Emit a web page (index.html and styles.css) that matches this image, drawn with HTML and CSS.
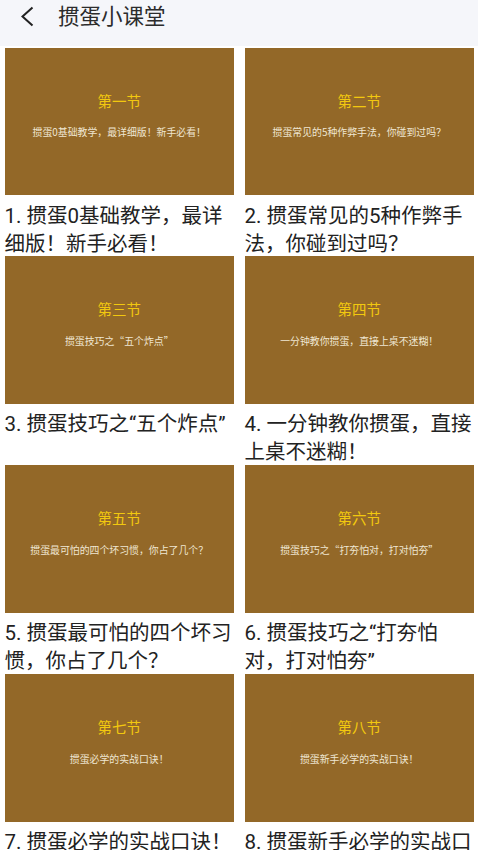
FILE: index.html
```html
<!DOCTYPE html>
<html lang="zh-CN">
<head>
    <meta charset="UTF-8">
    <meta name="viewport" content="width=device-width, initial-scale=1.0">
    <title>掼蛋小课堂</title>
    <link rel="stylesheet" href="styles.css">
</head>
<body>
<header class="topbar">
    <svg class="back" width="14" height="22" viewBox="0 0 14 22">
        <path d="M11.5 1.5 L1.5 10.5 L11.5 19.5" fill="none" stroke="#222" stroke-width="2"/>
    </svg>
    <h1>掼蛋小课堂</h1>
</header>

<main class="lessons">
    <section class="lesson">
        <div class="cover">
            <p class="cover-title">第一节</p>
            <p class="cover-sub">掼蛋0基础教学，最详细版！新手必看！</p>
        </div>
        <h2>1. 掼蛋0基础教学，最详细版！新手必看！</h2>
    </section>
    <section class="lesson">
        <div class="cover">
            <p class="cover-title">第二节</p>
            <p class="cover-sub">掼蛋常见的5种作弊手法，你碰到过吗？</p>
        </div>
        <h2>2. 掼蛋常见的5种作弊手法，你碰到过吗？</h2>
    </section>
    <section class="lesson">
        <div class="cover">
            <p class="cover-title">第三节</p>
            <p class="cover-sub">掼蛋技巧之“五个炸点”</p>
        </div>
        <h2>3. 掼蛋技巧之“五个炸点”</h2>
    </section>
    <section class="lesson">
        <div class="cover">
            <p class="cover-title">第四节</p>
            <p class="cover-sub">一分钟教你掼蛋，直接上桌不迷糊！</p>
        </div>
        <h2>4. 一分钟教你掼蛋，直接上桌不迷糊！</h2>
    </section>
    <section class="lesson">
        <div class="cover">
            <p class="cover-title">第五节</p>
            <p class="cover-sub">掼蛋最可怕的四个坏习惯，你占了几个？</p>
        </div>
        <h2>5. 掼蛋最可怕的四个坏习惯，你占了几个？</h2>
    </section>
    <section class="lesson">
        <div class="cover">
            <p class="cover-title">第六节</p>
            <p class="cover-sub">掼蛋技巧之“打夯怕对，打对怕夯”</p>
        </div>
        <h2>6. 掼蛋技巧之“打夯怕对，打对怕夯”</h2>
    </section>
    <section class="lesson">
        <div class="cover">
            <p class="cover-title">第七节</p>
            <p class="cover-sub">掼蛋必学的实战口诀！</p>
        </div>
        <h2>7. 掼蛋必学的实战口诀！</h2>
    </section>
    <section class="lesson">
        <div class="cover">
            <p class="cover-title">第八节</p>
            <p class="cover-sub">掼蛋新手必学的实战口诀！</p>
        </div>
        <h2>8. 掼蛋新手必学的实战口诀！</h2>
    </section>
</main>
</body>
</html>
```

FILE: styles.css
```css
* {
    margin: 0;
    padding: 0;
    box-sizing: border-box;
}
html, body {
    height: 850px;
    overflow: hidden;
}
body {
    font-family: Roboto, "Noto Sans CJK SC", sans-serif;
    background-color: #ffffff;
    color: #222;
}
.topbar {
    display: flex;
    align-items: center;
    height: 46px;
    padding: 0 0 12px 21px;
    background-color: #f5f6fa;
}
.back {
    margin-right: 23px;
}
.topbar h1 {
    margin-bottom: 5px;
    font-size: 21.5px;
    font-weight: 400;
    color: #2c2c2c;
}
.lessons {
    display: grid;
    grid-template-columns: 229.5px 229.5px;
    grid-auto-rows: 208.8px;
    column-gap: 10.5px;
    padding: 1.7px 0 0 4.5px;
}
.cover {
    display: flex;
    flex-direction: column;
    align-items: center;
    height: 147.5px;
    padding-top: 46px;
    background-color: #936828;
}
.cover-title {
    font-size: 14.5px;
    line-height: 18px;
    color: #f2c80f;
}
.cover-sub {
    margin-top: 14.5px;
    font-family: "Noto Sans CJK SC", sans-serif;
    font-size: 9.9px;
    line-height: 12px;
    color: #efe6d2;
    white-space: nowrap;
}
.lesson h2 {
    margin-top: 6.5px;
    font-size: 20.5px;
    font-weight: 400;
    line-height: 28px;
}
```
